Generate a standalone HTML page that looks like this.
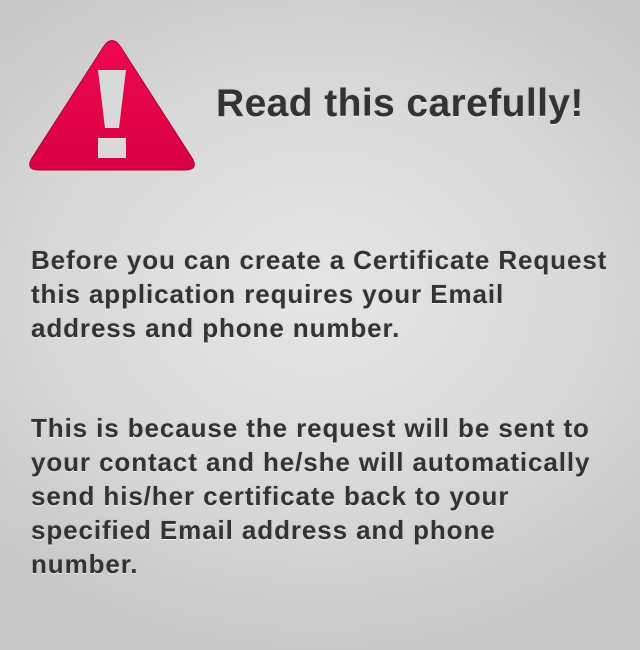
<!DOCTYPE html>
<html><head><style>
html,body{margin:0;padding:0}
body{width:640px;height:650px;overflow:hidden;position:relative;
background:radial-gradient(ellipse 70% 55% at 50% 45%,#e6e6e6 0%,#d8d8d8 60%,#c8c8c8 100%);
font-family:"Liberation Sans",Arial,sans-serif;color:#333;}
.t{position:absolute;font-weight:bold;text-shadow:0 1px 1px rgba(255,255,255,.8),0 0 2px rgba(0,0,0,.15);white-space:nowrap}
#h{left:216px;top:82px;font-size:39px;letter-spacing:0.4px}
.p{left:31px;font-size:26px;line-height:34px;letter-spacing:0.9px}
</style></head><body>
<svg style="position:absolute;left:0;top:0" width="220" height="190">
<defs><linearGradient id="g" x1="0" y1="0" x2="0" y2="1"><stop offset="0" stop-color="#f0084f"/><stop offset="1" stop-color="#d80044"/></linearGradient></defs>
<path d="M104,46 Q112,35 120,46 L192,158 Q199,170 185,170 L39,170 Q25,170 32,158 Z" fill="url(#g)" stroke="#b00035" stroke-width="1"/>
<path d="M98,70 L126,70 L119,128 L105,128 Z" fill="#d9d9d9"/>
<rect x="98" y="138" width="28" height="20" fill="#d9d9d9"/>
</svg>
<div class="t" id="h">Read this carefully!</div>
<div class="t p" style="top:243px">Before you can create a Certificate Request<br>this application requires your Email<br>address and phone number.</div>
<div class="t p" style="top:411px">This is because the request will be sent to<br>your contact and he/she will automatically<br>send his/her certificate back to your<br>specified Email address and phone<br>number.</div>
</body></html>
